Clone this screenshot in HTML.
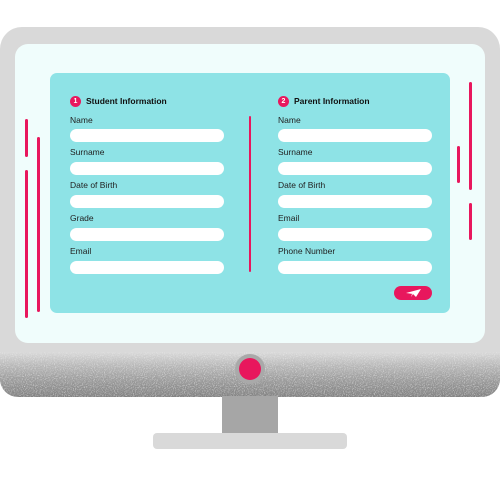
<!DOCTYPE html>
<html><head><style>
body{margin:0;width:500px;height:500px;background:#fff;position:relative;overflow:hidden;font-family:"Liberation Sans",sans-serif}
div{position:absolute;box-sizing:border-box}
.l{font-size:8.5px;color:#222}
.i{background:#fff;border-radius:7px;height:13px;width:154px}
.p{background:#e8175d;width:3px;border-radius:2px}
.h{font-size:8.5px;font-weight:bold;color:#111}
.n{width:11px;height:11px;border-radius:50%;background:#e8175d;color:#fff;font-size:7px;text-align:center;line-height:11px;font-weight:bold}
</style></head><body>
<div style="left:0;top:27px;width:500px;height:370px;background:#d9d9d9;border-radius:22px 22px 18px 18px;overflow:hidden">
 <div style="left:0;top:325px;width:500px;height:45px;background:linear-gradient(#d9d9d9,#b8b8b8 30%,#999 65%,#828282);"></div>
 <svg width="500" height="45" style="position:absolute;left:0;top:325px"><filter id="f"><feTurbulence type="fractalNoise" baseFrequency="0.9" numOctaves="2"/><feColorMatrix values="0 0 0 0 0.85  0 0 0 0 0.85  0 0 0 0 0.85  0 0 0 -2.2 1.2"/></filter><rect width="500" height="45" filter="url(#f)" opacity="0.8"/></svg>
</div>
<div style="left:15px;top:44px;width:470px;height:299px;background:#f0fdfc;border-radius:13px"></div>
<div style="left:50px;top:73px;width:400px;height:240px;background:#8ee3e6;border-radius:7px"></div>
<div style="left:235px;top:354px;width:30px;height:30px;border-radius:50%;background:#a9a9a9"></div>
<div style="left:239px;top:358px;width:22px;height:22px;border-radius:50%;background:#e8175d"></div>
<div style="left:222px;top:396px;width:56px;height:37px;background:#a6a6a6"></div>
<div style="left:153px;top:433px;width:194px;height:16px;background:#d9d9d9;border-radius:4px"></div>
<div class="p" style="left:25px;top:119px;height:38px"></div>
<div class="p" style="left:25px;top:170px;height:148px"></div>
<div class="p" style="left:37px;top:137px;height:175px"></div>
<div class="p" style="left:469px;top:82px;height:108px"></div>
<div class="p" style="left:457px;top:146px;height:37px"></div>
<div class="p" style="left:469px;top:203px;height:37px"></div>
<div class="p" style="left:249px;top:116px;width:2px;height:156px"></div>
<div class="n" style="left:70px;top:96px">1</div><div class="h" style="left:86px;top:96px">Student Information</div>
<div class="n" style="left:278px;top:96px">2</div><div class="h" style="left:294px;top:96px">Parent Information</div>
<div class="l" style="left:70px;top:115px">Name</div><div class="i" style="left:70px;top:129px"></div>
<div class="l" style="left:70px;top:147px">Surname</div><div class="i" style="left:70px;top:162px"></div>
<div class="l" style="left:70px;top:180px">Date of Birth</div><div class="i" style="left:70px;top:195px"></div>
<div class="l" style="left:70px;top:213px">Grade</div><div class="i" style="left:70px;top:228px"></div>
<div class="l" style="left:70px;top:246px">Email</div><div class="i" style="left:70px;top:261px"></div>
<div class="l" style="left:278px;top:115px">Name</div><div class="i" style="left:278px;top:129px"></div>
<div class="l" style="left:278px;top:147px">Surname</div><div class="i" style="left:278px;top:162px"></div>
<div class="l" style="left:278px;top:180px">Date of Birth</div><div class="i" style="left:278px;top:195px"></div>
<div class="l" style="left:278px;top:213px">Email</div><div class="i" style="left:278px;top:228px"></div>
<div class="l" style="left:278px;top:246px">Phone Number</div><div class="i" style="left:278px;top:261px"></div>
<div style="left:394px;top:286px;width:38px;height:14px;background:#e8175d;border-radius:7px">
<svg width="38" height="14" style="position:absolute;left:0;top:0"><path d="M12 7 L27 3 L22 11 L19 8 Z M19 8 L17 11 L18 8Z" fill="#fff"/></svg></div>
</body></html>
